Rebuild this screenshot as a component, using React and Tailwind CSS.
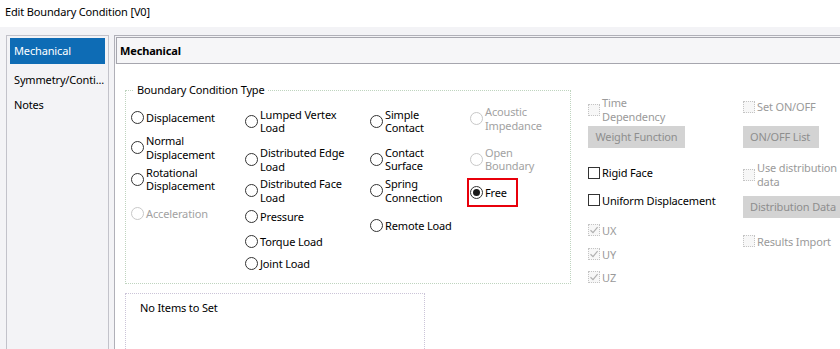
import React from "react"

const Radio = ({ checked, disabled }) => (
  <span
    className={
      disabled
        ? "w-[13px] h-[13px] rounded-full border border-[#c8c8c8] bg-white shrink-0"
        : "w-[13px] h-[13px] rounded-full border border-[#333] bg-white shrink-0 flex items-center justify-center"
    }
  >
    {checked && <span className="w-[7px] h-[7px] rounded-full bg-[#1a1a1a]" />}
  </span>
)

const RadioItem = ({ label, disabled, checked, className = "" }) => (
  <div className={`flex items-center gap-[2px] ${className}`}>
    <Radio checked={checked} disabled={disabled} />
    <span className={disabled ? "text-[#a2a2a2]" : "text-black"}>{label}</span>
  </div>
)

const Check = ({ checked, disabled }) => (
  <span
    className={
      disabled
        ? "w-[12px] h-[12px] border border-dotted border-[#c4c4c4] bg-[#f7f7f7] shrink-0 flex items-center justify-center"
        : "w-[12px] h-[12px] border border-[#333] bg-white shrink-0"
    }
  >
    {checked && (
      <svg width="10" height="10" viewBox="0 0 10 10">
        <path d="M1.5 5.2 L4 7.6 L8.6 2.2" fill="none" stroke="#b0b0b0" strokeWidth="1.2" />
      </svg>
    )}
  </span>
)

const CheckItem = ({ label, disabled, checked, className = "" }) => (
  <div className={`flex items-center gap-[2px] ${className}`}>
    <Check checked={checked} disabled={disabled} />
    <span className={disabled ? "text-[#9a9a9a]" : "text-black"}>{label}</span>
  </div>
)

const GrayButton = ({ label, className = "" }) => (
  <div className={`h-[22px] shrink-0 bg-[#d3d3d3] text-[#8e8e8e] flex items-center whitespace-nowrap px-[7px] ${className}`}>{label}</div>
)

export default function App() {
  return (
    <div className="w-[840px] h-[349px] overflow-hidden bg-[#f3f3f6] flex flex-col text-[11px] tracking-[-0.15px] leading-[13.5px] font-['Noto_Sans',sans-serif]">
      <div className="h-[27px] shrink-0 bg-white flex items-center px-[5px] pb-[4px] text-black">Edit Boundary Condition [V0]</div>

      <div className="flex flex-1 pt-[8px] min-h-0">
        {/* sidebar */}
        <div className="ml-[6px] w-[103px] shrink-0 border-l border-r border-t border-[#c2c2ca] pt-[2px] px-[3px]">
          <div className="h-[26px] bg-[#0e6cb5] text-white flex items-center pl-[4px]">Mechanical</div>
          <div className="h-[25px] mt-[3px] flex items-center pl-[4px] whitespace-nowrap">Symmetry/Conti...</div>
          <div className="h-[25px] flex items-center pl-[4px]">Notes</div>
        </div>

        {/* main panel */}
        <div className="ml-[5px] flex-1 flex flex-col border-l border-t border-[#b0b0b8] min-w-0">
          <div className="h-[27px] shrink-0 mt-[1px] ml-[1px] border border-[#a6a6ae] border-r-0 bg-[#f6f6f8] flex items-center pl-[3px] font-bold">
            Mechanical
          </div>

          <div className="flex-1 bg-white pl-[10px] overflow-hidden">
            <div className="flex mt-[18px]">
              <fieldset className="w-[446px] h-[202px] shrink-0 border border-dotted border-[#bfd4bf] pl-[5px]">
                <legend className="ml-[3px] px-[3px] leading-[16px]">Boundary Condition Type</legend>
                <div className="flex">
                  <div className="w-[114px] flex flex-col">
                    <RadioItem label="Displacement" className="mt-[13px]" />
                    <RadioItem label={<>Normal<br />Displacement</>} className="mt-[9.5px]" />
                    <RadioItem label={<>Rotational<br />Displacement</>} className="mt-[4.5px]" />
                    <RadioItem label="Acceleration" disabled className="mt-[14.5px]" />
                  </div>
                  <div className="w-[125px] flex flex-col">
                    <RadioItem label={<>Lumped Vertex<br />Load</>} className="mt-[9.5px]" />
                    <RadioItem label={<>Distributed Edge<br />Load</>} className="mt-[11.5px]" />
                    <RadioItem label={<>Distributed Face<br />Load</>} className="mt-[4px]" />
                    <RadioItem label="Pressure" className="mt-[6px]" />
                    <RadioItem label="Torque Load" className="mt-[11.5px]" />
                    <RadioItem label="Joint Load" className="mt-[8.5px]" />
                  </div>
                  <div className="w-[100px] flex flex-col">
                    <RadioItem label={<>Simple<br />Contact</>} className="mt-[9.5px]" />
                    <RadioItem label={<>Contact<br />Surface</>} className="mt-[11px]" />
                    <RadioItem label={<>Spring<br />Connection</>} className="mt-[4.5px]" />
                    <RadioItem label="Remote Load" className="mt-[15px]" />
                  </div>
                  <div className="flex flex-col">
                    <RadioItem label={<>Acoustic<br />Impedance</>} disabled className="mt-[7px]" />
                    <RadioItem label={<>Open<br />Boundary</>} disabled className="mt-[13.5px]" />
                    <div className="mt-[5.5px] -ml-[3px] w-[51px] h-[29px] border-2 border-[#e8000b] pl-[1px] flex items-center">
                      <RadioItem label="Free" checked />
                    </div>
                  </div>
                </div>
              </fieldset>

              <div className="ml-[17px] w-[155px] shrink-0 flex flex-col items-start">
                <CheckItem label={<>Time<br />Dependency</>} disabled className="mt-[14px]" />
                <GrayButton label="Weight Function" className="mt-[3px] w-[97px] justify-center px-0" />
                <CheckItem label="Rigid Face" className="mt-[18px]" />
                <CheckItem label="Uniform Displacement" className="mt-[14px]" />
                <CheckItem label="UX" disabled checked className="mt-[16.5px]" />
                <CheckItem label="UY" disabled checked className="mt-[10.5px]" />
                <CheckItem label="UZ" disabled checked className="mt-[9.5px]" />
              </div>

              <div className="shrink-0 flex flex-col items-start">
                <CheckItem label="Set ON/OFF" disabled className="mt-[18px]" />
                <GrayButton label="ON/OFF List" className="mt-[12px] w-[76px]" />
                <CheckItem label={<>Use distribution<br />data</>} disabled className="mt-[13.5px]" />
                <GrayButton label="Distribution Data" className="mt-[7.5px] w-[120px]" />
                <CheckItem label="Results Import" disabled className="mt-[17px]" />
              </div>
            </div>

            <div className="mt-[9px] w-[300px] h-[70px] border border-dotted border-[#cbc4d8] pl-[14px] pt-[7px]">No Items to Set</div>
          </div>
        </div>
      </div>
    </div>
  )
}
